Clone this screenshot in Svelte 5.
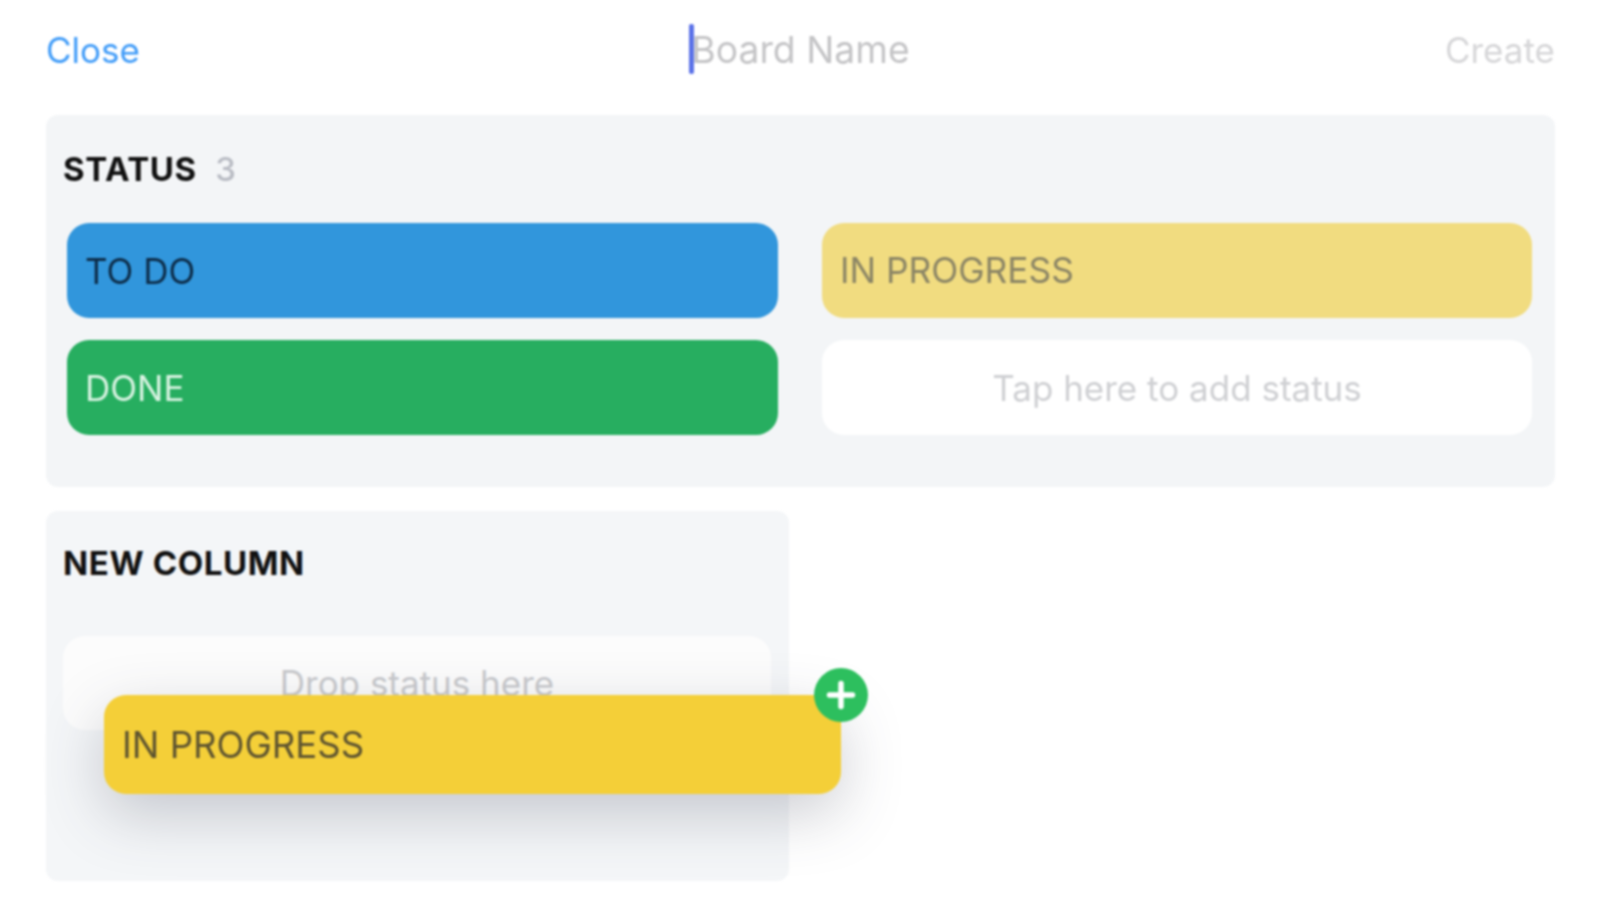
<script lang="ts">
    const statuses = [
        { label: 'TO DO', kind: 'todo' },
        { label: 'IN PROGRESS', kind: 'progress' },
        { label: 'DONE', kind: 'done' }
    ];
</script>

<div class="page">
    <header class="topbar">
        <span class="close">Close</span>
        <span class="title"><i class="caret"></i>Board Name</span>
        <span class="create">Create</span>
    </header>

    <section class="panel status-panel">
        <h2>STATUS <span class="count">{statuses.length}</span></h2>
        <div class="status-grid">
            {#each statuses as s}
                <div class="pill {s.kind}">{s.label}</div>
            {/each}
            <div class="pill add">Tap here to add status</div>
        </div>
    </section>

    <section class="panel column-panel">
        <h2>NEW COLUMN</h2>
        <div class="dropzone">Drop status here</div>
        <div class="dragged">
            IN PROGRESS
            <span class="plus">
                <svg viewBox="0 0 54 54" width="54" height="54">
                    <path d="M27 15.5v23M15.5 27h23" stroke="#fff" stroke-width="5.5" stroke-linecap="round" fill="none" />
                </svg>
            </span>
        </div>
    </section>
</div>

<style>
    :global(body) {
        background: #fff;
        overflow: hidden;
    }

    .page {
        height: 900px;
        padding: 0 44px 0 46px;
        box-sizing: border-box;
        font-family: Inter, "Liberation Sans", sans-serif;
        font-size: 35px;
        filter: blur(0.9px);
    }

    .topbar {
        display: grid;
        grid-template-columns: 1fr auto 1fr;
        align-items: center;
        height: 99px;
        margin-bottom: 16px;
    }
    .close {
        color: #3f9bf8;
    }
    .title {
        position: relative;
        color: #c4c4c6;
        font-size: 37.3px;
    }
    .caret {
        position: absolute;
        left: -2px;
        top: -3px;
        width: 5px;
        height: 50px;
        border-radius: 2px;
        background: #5b72e8;
    }
    .create {
        justify-self: end;
        color: #d6d6d8;
    }

    .panel {
        background: #f3f5f7;
        border-radius: 12px;
        box-sizing: border-box;
    }
    h2 {
        margin: 0;
        font-size: 33px;
        font-weight: 700;
        letter-spacing: 0.6px;
        color: #111;
        line-height: 40px;
    }

    .status-panel {
        height: 372px;
        padding: 34px 23px 0 17px;
    }
    .count {
        margin-left: 10px;
        font-weight: 500;
        color: #b9bcc4;
    }
    .status-grid {
        display: grid;
        grid-template-columns: 711px 710px;
        justify-content: space-between;
        grid-auto-rows: 95px;
        row-gap: 22px;
        margin: 34px 0 0 4px;
    }
    .pill {
        display: flex;
        align-items: center;
        padding: 0 18px;
        border-radius: 22px;
    }
    .todo {
        background: #3196dc;
        color: #0d2c48;
    }
    .progress {
        background: #f1dc80;
        color: #8b8565;
        font-size: 35.3px;
    }
    .done {
        background: #27ae60;
        color: #d9f3e2;
    }
    .add {
        justify-content: center;
        background: #fff;
        color: #cfd0d3;
    }

    .column-panel {
        position: relative;
        width: 743px;
        height: 370px;
        margin-top: 24px;
        padding: 32px 18px 0 17px;
        background: #f4f6f8;
    }
    .dropzone {
        display: flex;
        justify-content: center;
        align-items: center;
        height: 94px;
        margin-top: 53px;
        border-radius: 22px;
        background: #fcfcfc;
        color: #c9cacd;
    }
    .dragged {
        position: absolute;
        left: 58px;
        top: 184px;
        width: 737px;
        height: 99px;
        box-sizing: border-box;
        display: flex;
        align-items: center;
        padding: 0 18px;
        border-radius: 22px;
        background: #f4cf38;
        color: #5f5530;
        font-size: 36.6px;
        box-shadow: 0 20px 60px rgba(60, 66, 84, 0.26);
    }
    .plus {
        position: absolute;
        right: -27px;
        top: -27px;
        width: 54px;
        height: 54px;
        border-radius: 50%;
        background: #2dbf5e;
    }
    .plus svg {
        display: block;
    }
</style>
